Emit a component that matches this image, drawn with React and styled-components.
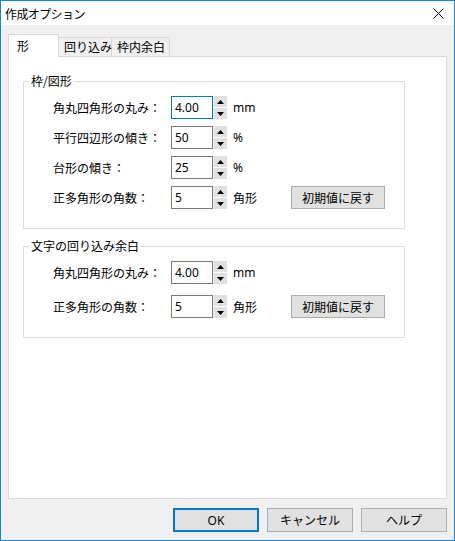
import styled, { createGlobalStyle } from 'styled-components';

const shapeRows = [
  { id: 1, label: '角丸四角形の丸み：', value: '4.00', unit: 'mm', focused: true },
  { id: 2, label: '平行四辺形の傾き：', value: '50', unit: '%' },
  { id: 3, label: '台形の傾き：', value: '25', unit: '%' },
  { id: 4, label: '正多角形の角数：', value: '5', unit: '角形', reset: true },
];

const wrapRows = [
  { id: 1, label: '角丸四角形の丸み：', value: '4.00', unit: 'mm' },
  { id: 2, label: '正多角形の角数：', value: '5', unit: '角形', reset: true },
];

const tabs = [
  { id: 1, title: '形', width: 51, active: true },
  { id: 2, title: '回り込み', width: 53 },
  { id: 3, title: '枠内余白', width: 58 },
];

function Arrow({ down }) {
  return (
    <svg width="7" height="4" viewBox="0 0 7 4">
      <path d={down ? 'M0 0H7L3.5 4Z' : 'M0 4H7L3.5 0Z'} fill="#000" />
    </svg>
  );
}

function SpinRow({ label, value, unit, focused, reset }) {
  return (
    <Row>
      <Label>{label}</Label>
      <SpinInput $focused={focused}>{value}</SpinInput>
      <Spinner>
        <SpinButton>
          <Arrow />
        </SpinButton>
        <SpinButton>
          <Arrow down />
        </SpinButton>
      </Spinner>
      <Unit>{unit}</Unit>
      {reset && <ResetButton>初期値に戻す</ResetButton>}
    </Row>
  );
}

function App() {
  return (
    <>
      <GlobalStyle />
      <Window>
        <TitleBar>
          <Title>作成オプション</Title>
          <svg width="11" height="11" viewBox="0 0 11 11">
            <path d="M0.5 0.5L10.5 10.5M10.5 0.5L0.5 10.5" stroke="#000" strokeWidth="1" />
          </svg>
        </TitleBar>
        <Body>
          <TabStrip>
            {tabs.map(({ id, title, width, active }) => (
              <Tab key={id} $active={active} style={{ width }}>
                {title}
              </Tab>
            ))}
          </TabStrip>
          <Panel>
            <Group>
              <Legend>枠/図形</Legend>
              <Rows $gap={7}>
                {shapeRows.map((r) => (
                  <SpinRow key={r.id} {...r} />
                ))}
              </Rows>
            </Group>
            <Group>
              <Legend>文字の回り込み余白</Legend>
              <Rows $gap={11}>
                {wrapRows.map((r) => (
                  <SpinRow key={r.id} {...r} />
                ))}
              </Rows>
            </Group>
          </Panel>
          <Footer>
            <DialogButton $default>OK</DialogButton>
            <DialogButton>キャンセル</DialogButton>
            <DialogButton>ヘルプ</DialogButton>
          </Footer>
        </Body>
      </Window>
    </>
  );
}

const GlobalStyle = createGlobalStyle`
  html, body {
    margin: 0;
    padding: 0;
    background: #fff;
  }
  body {
    font-family: "Noto Sans CJK JP", "Noto Sans", sans-serif;
    font-size: 12px;
    color: #000;
  }
`;

const Window = styled.div`
  width: 455px;
  height: 541px;
  box-sizing: border-box;
  border: 1px solid #1883d7;
  background: #f0f0f0;
  display: flex;
  flex-direction: column;
`;

const TitleBar = styled.div`
  height: 24px;
  flex: none;
  background: #fff;
  display: flex;
  align-items: center;
  justify-content: space-between;
  padding: 0 10px 0 4px;
`;

const Title = styled.span`
  font-size: 12px;
  letter-spacing: -0.6px;
`;

const Body = styled.div`
  flex: 1;
  display: flex;
  flex-direction: column;
  padding: 9px 7px 8px 7px;
  min-height: 0;
`;

const TabStrip = styled.div`
  display: flex;
  align-items: flex-end;
  height: 23px;
  flex: none;
  margin-bottom: -1px;
  position: relative;
  z-index: 1;
`;

const Tab = styled.div`
  box-sizing: border-box;
  height: ${(p) => (p.$active ? '23px' : '20px')};
  background: ${(p) => (p.$active ? '#fff' : '#f0f0f0')};
  border: 1px solid #d9d9d9;
  border-bottom: ${(p) => (p.$active ? 'none' : '1px solid #d9d9d9')};
  border-left: ${(p) => (p.$active ? '1px solid #d9d9d9' : 'none')};
  padding: ${(p) => (p.$active ? '3px 0 0 8px' : '1px 0 0 5px')};
  line-height: 16px;
  white-space: nowrap;
`;

const Panel = styled.div`
  flex: 1;
  background: #fff;
  border: 1px solid #d9d9d9;
  padding: 16px 14px 0 14px;
  display: flex;
  flex-direction: column;
  gap: 9px;
`;

const Group = styled.fieldset`
  margin: 0;
  width: 382px;
  box-sizing: border-box;
  border: 1px solid #dcdcdc;
  padding: 7px 0 19px 0;
  min-width: 0;
`;

const Legend = styled.legend`
  padding: 0 2px;
  margin-left: 5px;
  line-height: 16px;
`;

const Rows = styled.div`
  display: flex;
  flex-direction: column;
  gap: ${(p) => p.$gap}px;
  padding-left: 29px;
`;

const Row = styled.div`
  display: flex;
  align-items: center;
  height: 23px;
`;

const Label = styled.span`
  width: 118px;
  flex: none;
  white-space: nowrap;
`;

const SpinInput = styled.div`
  box-sizing: border-box;
  width: 42px;
  height: 23px;
  border: 1px solid ${(p) => (p.$focused ? '#0078d7' : '#7a7a7a')};
  background: #fff;
  padding-left: 3px;
  line-height: 21px;
  font-family: "Noto Sans", "Noto Sans CJK JP", sans-serif;
`;

const Spinner = styled.div`
  width: 14px;
  height: 23px;
  display: flex;
  flex-direction: column;
  gap: 1px;
  flex: none;
`;

const SpinButton = styled.div`
  flex: 1;
  background: #e1e1e1;
  border-left: 1px solid #f0f0f0;
  display: flex;
  align-items: center;
  justify-content: center;
`;

const Unit = styled.span`
  width: 64px;
  padding-left: 6px;
  box-sizing: border-box;
  flex: none;
  font-family: "Noto Sans", "Noto Sans CJK JP", sans-serif;
`;

const ResetButton = styled.div`
  box-sizing: border-box;
  width: 94px;
  height: 23px;
  background: #e1e1e1;
  border: 1px solid #adadad;
  display: flex;
  align-items: center;
  justify-content: center;
  margin-top: -1px;
`;

const Footer = styled.div`
  display: flex;
  justify-content: flex-end;
  gap: 8px;
  padding-top: 9px;
  flex: none;
`;

const DialogButton = styled.div`
  box-sizing: border-box;
  width: 86px;
  height: 24px;
  background: #e1e1e1;
  border: ${(p) => (p.$default ? '2px solid #0078d7' : '1px solid #adadad')};
  display: flex;
  align-items: center;
  justify-content: center;
  font-family: "Noto Sans", "Noto Sans CJK JP", sans-serif;
`;

export default App;
